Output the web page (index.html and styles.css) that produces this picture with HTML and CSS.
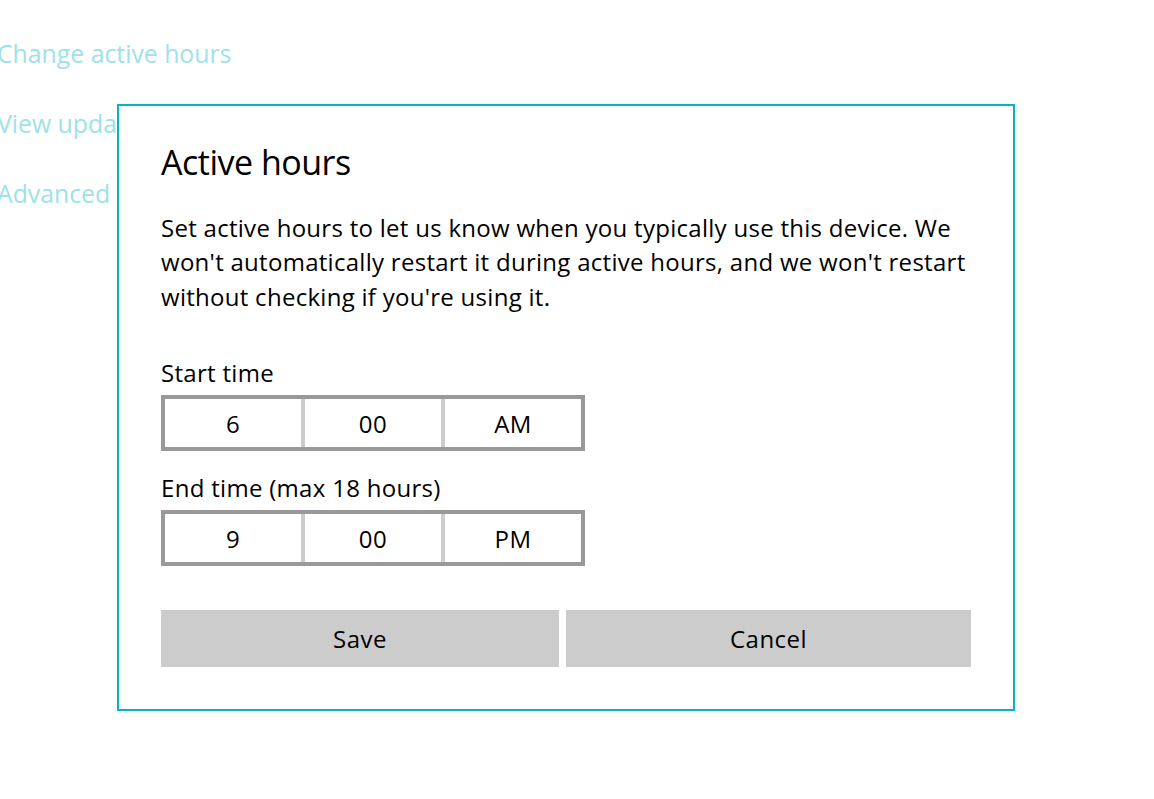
FILE: index.html
```html
<!DOCTYPE html>
<html lang="en">
<head>
<meta charset="utf-8">
<title>Active hours</title>
<link rel="stylesheet" href="styles.css">
</head>
<body>
  <nav class="links">
    <a class="link">Change active hours</a>
    <a class="link">View update history</a>
    <a class="link">Advanced options</a>
  </nav>

  <section class="dialog" role="dialog" aria-labelledby="dlg-title">
    <h1 class="dialog-title" id="dlg-title">Active hours</h1>
    <p class="dialog-text">Set active hours to let us know when you typically use this device. We won't automatically restart it during active hours, and we won't restart without checking if you're using it.</p>

    <div class="field-label label-start">Start time</div>
    <div class="picker">
      <div class="cell">6</div>
      <div class="cell">00</div>
      <div class="cell">AM</div>
    </div>

    <div class="field-label label-end">End time (max 18 hours)</div>
    <div class="picker">
      <div class="cell">9</div>
      <div class="cell">00</div>
      <div class="cell">PM</div>
    </div>

    <div class="actions">
      <button class="btn" type="button">Save</button>
      <button class="btn" type="button">Cancel</button>
    </div>
  </section>
</body>
</html>
```

FILE: styles.css
```css
html, body {
  margin: 0;
  padding: 0;
  background: #ffffff;
}

body {
  width: 1154px;
  height: 799px;
  overflow: hidden;
  position: relative;
  font-family: "Open Sans", "Noto Sans", sans-serif;
  color: #000000;
}

.links {
  display: flex;
  flex-direction: column;
  align-items: flex-start;
  padding-top: 18px;
  margin-left: -3px;
}

.link {
  font-size: 24.8px;
  line-height: 70px;
  color: #9de2e8;
  white-space: nowrap;
}

.dialog {
  position: absolute;
  left: 117px;
  top: 104px;
  width: 898px;
  box-sizing: border-box;
  border: 2px solid #00b7c3;
  background: #ffffff;
  padding: 36px 42px 42px 42px;
  display: flex;
  flex-direction: column;
}

.dialog-title {
  margin: 0;
  font-size: 34px;
  line-height: 40px;
  font-weight: 400;
  letter-spacing: -0.5px;
}

.dialog-text {
  margin: 28.5px 0 0 0;
  font-size: 24px;
  line-height: 34.5px;
  letter-spacing: 0.28px;
}

.field-label {
  font-size: 24px;
  line-height: 34.5px;
  letter-spacing: 0.3px;
}

.label-start {
  margin-top: 41.5px;
}

.label-end {
  margin-top: 19.5px;
}

.picker {
  margin-top: 5px;
  width: 424px;
  height: 56px;
  box-sizing: border-box;
  border: 4px solid #999999;
  background: #cccccc;
  display: grid;
  grid-template-columns: repeat(3, 1fr);
  column-gap: 4px;
}

.cell {
  background: #ffffff;
  display: flex;
  align-items: center;
  justify-content: center;
  font-size: 24px;
  letter-spacing: 0.45px;
}

.actions {
  margin-top: 44px;
  display: grid;
  grid-template-columns: 398px 405px;
  column-gap: 7px;
}

.btn {
  height: 57px;
  border: none;
  margin: 0;
  padding: 0;
  background: #cccccc;
  font-family: "Open Sans", "Noto Sans", sans-serif;
  font-size: 24px;
  letter-spacing: 0.45px;
  color: #000000;
}
```
